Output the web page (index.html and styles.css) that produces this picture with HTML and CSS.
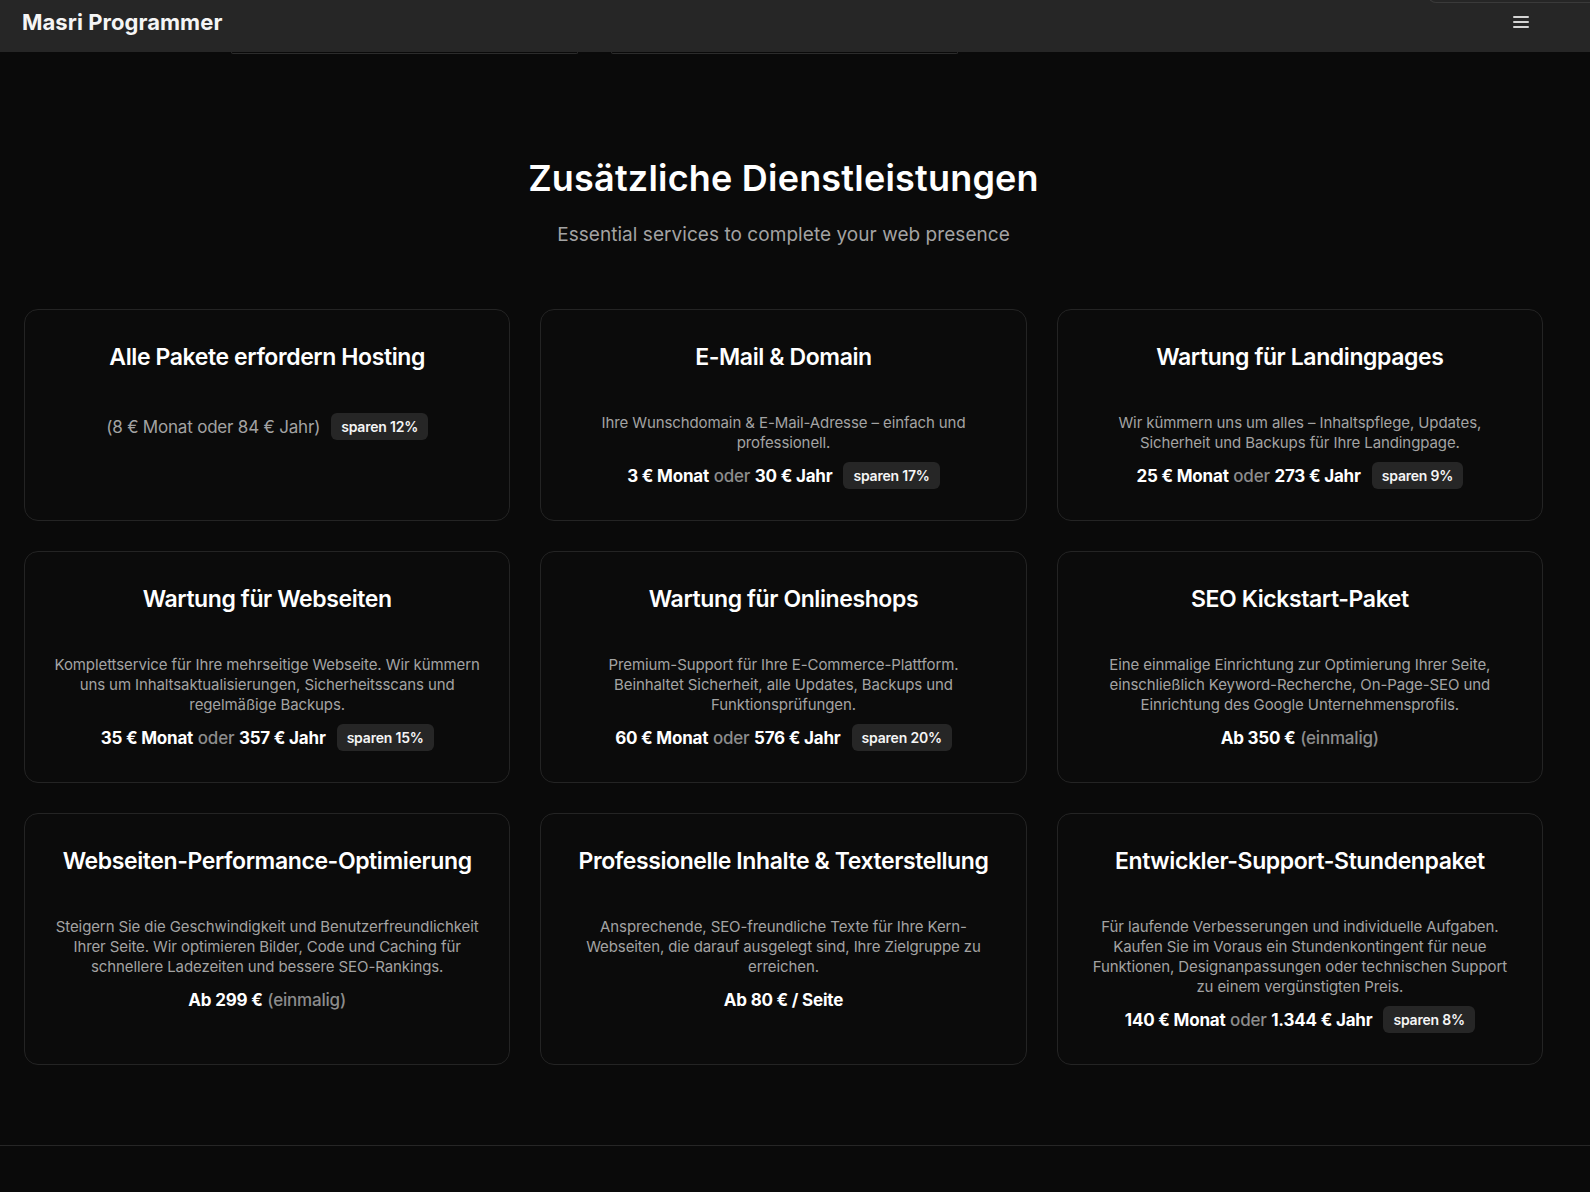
FILE: index.html
```html
<!DOCTYPE html>
<html lang="de">
<head>
<meta charset="utf-8">
<title>Masri Programmer – Zusätzliche Dienstleistungen</title>
<link rel="stylesheet" href="styles.css">
</head>
<body>
<header class="topbar">
  <div class="logo">Masri Programmer</div>
  <button class="menu-btn" aria-label="Menü">
    <span></span><span></span><span></span>
  </button>
  <div class="dropdown-edge"></div>
</header>
<main class="page">
  <div class="prev-row">
    <div class="prev-card"></div>
    <div class="prev-card"></div>
  </div>
  <section class="services">
    <h2 class="services-title">Zusätzliche Dienstleistungen</h2>
    <p class="services-sub">Essential services to complete your web presence</p>
    <div class="grid">
      <div class="card">
        <h3 class="card-title">Alle Pakete erfordern Hosting</h3>
        <div class="price"><span class="muted-lg">(8 € Monat oder 84 € Jahr)</span><span class="badge">sparen 12%</span></div>
      </div>
      <div class="card">
        <h3 class="card-title">E-Mail &amp; Domain</h3>
        <p class="desc">Ihre Wunschdomain &amp; E-Mail-Adresse – einfach und<br>professionell.</p>
        <div class="price"><b>3 € Monat</b> <span class="or">oder</span> <b>30 € Jahr</b><span class="badge">sparen 17%</span></div>
      </div>
      <div class="card">
        <h3 class="card-title">Wartung für Landingpages</h3>
        <p class="desc">Wir kümmern uns um alles – Inhaltspflege, Updates,<br>Sicherheit und Backups für Ihre Landingpage.</p>
        <div class="price"><b>25 € Monat</b> <span class="or">oder</span> <b>273 € Jahr</b><span class="badge">sparen 9%</span></div>
      </div>
      <div class="card">
        <h3 class="card-title">Wartung für Webseiten</h3>
        <p class="desc">Komplettservice für Ihre mehrseitige Webseite. Wir kümmern<br>uns um Inhaltsaktualisierungen, Sicherheitsscans und<br>regelmäßige Backups.</p>
        <div class="price"><b>35 € Monat</b> <span class="or">oder</span> <b>357 € Jahr</b><span class="badge">sparen 15%</span></div>
      </div>
      <div class="card">
        <h3 class="card-title">Wartung für Onlineshops</h3>
        <p class="desc">Premium-Support für Ihre E-Commerce-Plattform.<br>Beinhaltet Sicherheit, alle Updates, Backups und<br>Funktionsprüfungen.</p>
        <div class="price"><b>60 € Monat</b> <span class="or">oder</span> <b>576 € Jahr</b><span class="badge">sparen 20%</span></div>
      </div>
      <div class="card">
        <h3 class="card-title">SEO Kickstart-Paket</h3>
        <p class="desc">Eine einmalige Einrichtung zur Optimierung Ihrer Seite,<br>einschließlich Keyword-Recherche, On-Page-SEO und<br>Einrichtung des Google Unternehmensprofils.</p>
        <div class="price"><b>Ab 350 €</b> <span class="or">(einmalig)</span></div>
      </div>
      <div class="card">
        <h3 class="card-title">Webseiten-Performance-Optimierung</h3>
        <p class="desc">Steigern Sie die Geschwindigkeit und Benutzerfreundlichkeit<br>Ihrer Seite. Wir optimieren Bilder, Code und Caching für<br>schnellere Ladezeiten und bessere SEO-Rankings.</p>
        <div class="price"><b>Ab 299 €</b> <span class="or">(einmalig)</span></div>
      </div>
      <div class="card">
        <h3 class="card-title">Professionelle Inhalte &amp; Texterstellung</h3>
        <p class="desc">Ansprechende, SEO-freundliche Texte für Ihre Kern-<br>Webseiten, die darauf ausgelegt sind, Ihre Zielgruppe zu<br>erreichen.</p>
        <div class="price"><b>Ab 80 € / Seite</b></div>
      </div>
      <div class="card">
        <h3 class="card-title">Entwickler-Support-Stundenpaket</h3>
        <p class="desc">Für laufende Verbesserungen und individuelle Aufgaben.<br>Kaufen Sie im Voraus ein Stundenkontingent für neue<br>Funktionen, Designanpassungen oder technischen Support<br>zu einem vergünstigten Preis.</p>
        <div class="price"><b>140 € Monat</b> <span class="or">oder</span> <b>1.344 € Jahr</b><span class="badge">sparen 8%</span></div>
      </div>
    </div>
  </section>
  <footer class="footer"></footer>
</main>
</body>
</html>
```

FILE: styles.css
```css
* { box-sizing: border-box; }

html, body {
  margin: 0;
  padding: 0;
  background: #0a0a0a;
  color: #fafafa;
  font-family: Inter, "Noto Sans", "Liberation Sans", sans-serif;
}

.topbar {
  position: sticky;
  top: 0;
  z-index: 10;
  height: 52px;
  background: #262626;
  display: flex;
  align-items: center;
  justify-content: space-between;
  padding: 0 61px 0 22px;
}

.logo {
  font-size: 22px;
  font-weight: 700;
  letter-spacing: 0.05px;
  color: #f5f5f5;
  margin-top: -8px;
}

.menu-btn {
  background: none;
  border: 0;
  padding: 0;
  width: 16px;
  display: flex;
  flex-direction: column;
  gap: 3px;
  margin-top: -9px;
  cursor: pointer;
}
.menu-btn span {
  display: block;
  height: 2px;
  background: #d4d4d4;
  border-radius: 1px;
}

.dropdown-edge {
  position: absolute;
  top: -20px;
  right: 0;
  width: 162px;
  height: 23px;
  border: 1px solid #3a3a3a;
  border-right: 0;
  border-bottom-left-radius: 8px;
}

.page {
  width: 1567px;
}

.prev-row {
  display: flex;
  gap: 33px;
  padding-left: 231px;
  height: 2px;
}
.prev-card {
  width: 347px;
  height: 2px;
  border: 1px solid #2c2c2c;
  border-top: 0;
  border-radius: 0 0 6px 6px;
}

.services {
  padding: 104px 24px 80px;
  text-align: center;
}

.services-title {
  margin: 0;
  font-size: 36px;
  line-height: 40px;
  font-weight: 600;
  letter-spacing: 0.2px;
  color: #ffffff;
}

.services-sub {
  margin: 23px 0 60px;
  font-size: 19px;
  line-height: 28px;
  color: #a3a3a3;
  letter-spacing: 0.05px;
}

.grid {
  display: grid;
  grid-template-columns: repeat(3, 1fr);
  gap: 30px;
}

.card {
  border: 1px solid #242424;
  border-radius: 14px;
  background: #0b0b0b;
  padding: 31px 20px 30px;
  display: flex;
  flex-direction: column;
  align-items: center;
}

.card-title {
  margin: 0 0 40px;
  font-size: 23px;
  line-height: 32px;
  font-weight: 600;
  letter-spacing: -0.4px;
  color: #ffffff;
}

.desc {
  margin: 0 0 9px;
  font-size: 15px;
  line-height: 20px;
  color: #a3a3a3;
  letter-spacing: -0.1px;
  white-space: nowrap;
}

.price {
  text-align: center;
  line-height: 28px;
  height: 28px;
  font-size: 17px;
  letter-spacing: -0.2px;
  white-space: nowrap;
}
.price b {
  font-weight: 700;
  color: #ffffff;
}
.price .or {
  color: #8c8c8c;
  font-weight: 500;
}

.muted-lg {
  color: #a3a3a3;
  font-size: 17px;
  font-weight: 400;
  letter-spacing: -0.2px;
}

.badge {
  display: inline-block;
  vertical-align: middle;
  margin-left: 11px;
  margin-top: -3px;
  background: #262626;
  color: #f5f5f5;
  border-radius: 6px;
  padding: 0 10px;
  height: 27px;
  line-height: 27px;
  font-size: 14px;
  font-weight: 600;
  letter-spacing: -0.2px;
}

.footer {
  border-top: 1px solid #262626;
  height: 60px;
  width: 1590px;
}
```
